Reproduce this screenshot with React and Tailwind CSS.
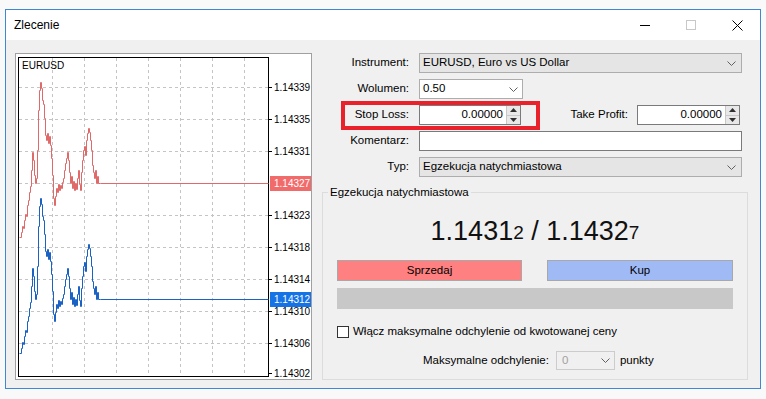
import React from 'react';

const red = [
  [19, 237], [21, 232], [22, 226], [23, 228], [24, 220], [25, 214], [26, 216], [27, 205], [28, 200], [29, 192],
  [30, 186], [31, 170], [32, 152], [33, 160], [34, 175], [35, 183], [36, 178], [37, 150], [38, 110], [39, 90],
  [40, 82], [41, 88], [42, 100], [43, 104], [44, 118], [45, 135], [46, 140], [47, 133], [48, 143], [49, 136],
  [50, 145], [51, 158], [52, 175], [53, 198], [54, 205], [55, 196], [56, 188], [57, 192], [58, 184], [59, 190],
  [60, 185], [61, 188], [62, 182], [63, 178], [64, 170], [65, 163], [66, 158], [67, 152], [68, 160], [69, 172],
  [70, 183], [71, 176], [72, 188], [73, 181], [74, 190], [75, 183], [76, 189], [77, 178], [78, 170], [79, 184],
  [80, 190], [81, 172], [82, 160], [83, 150], [84, 146], [85, 155], [86, 140], [87, 133], [88, 128], [89, 132],
  [90, 140], [91, 150], [92, 165], [93, 172], [94, 178], [95, 170], [96, 183], [97, 176], [98, 183], [100, 183],
  [268, 183],
];

// linia schodkowa jak w MT4
const toSteps = (pts, dy) => {
  let out = [];
  pts.forEach(([x, y], i) => {
    if (i > 0) out.push(`${x + 0.5},${pts[i - 1][1] + dy}`);
    out.push(`${x + 0.5},${y + dy}`);
  });
  return out.join(' ');
};

const priceLabels = [
  [87, '1.14339'], [119, '1.14335'], [151, '1.14331'], [215, '1.14323'], [247, '1.14318'],
  [279, '1.14314'], [311, '1.14310'], [343, '1.14306'], [373, '1.14302'],
];

// wykres EURUSD
function Chart() {
  return (
    <div className="w-[297px] h-[327px] border border-[#a0a0a0] bg-white shrink-0">
      <svg width="295" height="325" viewBox="16 54 295 325" className="block">
        {[52, 84, 116, 148, 180, 212, 244].map((x) => (
          <line key={x} x1={x + 0.5} y1="58" x2={x + 0.5} y2="376" stroke="#c4c4c4" strokeDasharray="3 3" />
        ))}
        {[87, 119, 151, 183, 215, 247, 279, 311, 343].map((y) => (
          <line key={y} x1="19" y1={y + 0.5} x2="268" y2={y + 0.5} stroke="#c4c4c4" strokeDasharray="3 3" />
        ))}
        <rect x="18.5" y="57.5" width="250" height="319" fill="none" stroke="#000" />
        {priceLabels.map(([y]) => (
          <line key={y} x1="268" y1={y + 0.5} x2="272" y2={y + 0.5} stroke="#000" />
        ))}
        <text x="22" y="69" fontSize="10" fontFamily="Liberation Sans, sans-serif" fill="#000">EURUSD</text>
        <polyline points={toSteps(red, 0.5)} fill="none" stroke="#e06a6a" strokeWidth="1" />
        <polyline points={toSteps(red, 116.5)} fill="none" stroke="#1a62c4" strokeWidth="1" />
        {priceLabels.map(([y, t]) => (
          <text key={t} x="274" y={y + 4} fontSize="10" fontFamily="Liberation Sans, sans-serif" fill="#000">{t}</text>
        ))}
        <rect x="270" y="176" width="41" height="15" fill="#f26b6b" />
        <text x="274" y="187" fontSize="10" fontFamily="Liberation Sans, sans-serif" fill="#fff">1.14327</text>
        <rect x="270" y="292" width="41" height="15" fill="#1573e6" />
        <text x="274" y="303" fontSize="10" fontFamily="Liberation Sans, sans-serif" fill="#fff">1.14312</text>
      </svg>
    </div>
  );
}

function Chevron() {
  return (
    <svg width="9" height="5" viewBox="0 0 9 5" className="shrink-0">
      <path d="M0.5 0.5 L4.5 4.5 L8.5 0.5" fill="none" stroke="#606060" />
    </svg>
  );
}

function Spinner() {
  return (
    <div className="w-[14px] h-full flex flex-col border-l border-[#c8c8c8] bg-[#e8e8e8]">
      <div className="flex-1 flex items-center justify-center border-b border-[#c8c8c8]">
        <svg width="7" height="4" viewBox="0 0 7 4"><path d="M0 4 L3.5 0 L7 4 Z" fill="#303030" /></svg>
      </div>
      <div className="flex-1 flex items-center justify-center">
        <svg width="7" height="4" viewBox="0 0 7 4"><path d="M0 0 L3.5 4 L7 0 Z" fill="#303030" /></svg>
      </div>
    </div>
  );
}

function Label({ children }) {
  return <div className="w-[88px] text-right pr-[1px] shrink-0">{children}</div>;
}

export default function App() {
  return (
    <div className="w-[766px] h-[399px] bg-[#f9f9f9] overflow-hidden font-['Liberation_Sans',sans-serif] text-[11.5px] text-black">
      <div className="ml-[5px] mt-[9px] w-[756px] h-[380px] border border-[#3d87d4] bg-[#f0f0f0] flex flex-col">
        {/* pasek tytułu */}
        <div className="h-[30px] bg-white flex items-center shrink-0">
          <span className="pl-[8px] text-[12px] flex-1">Zlecenie</span>
          <div className="w-[46px] h-full flex items-center justify-center">
            <div className="w-[10px] h-px bg-black" />
          </div>
          <div className="w-[46px] h-full flex items-center justify-center">
            <div className="w-[10px] h-[10px] border border-[#c8c8c8]" />
          </div>
          <div className="w-[46px] h-full flex items-center justify-center">
            <svg width="11" height="11" viewBox="0 0 11 11">
              <path d="M0.5 0.5 L10.5 10.5 M10.5 0.5 L0.5 10.5" stroke="#000" strokeWidth="1" />
            </svg>
          </div>
        </div>

        <div className="flex pl-[9px] pt-[13px] gap-[10px]">
          <Chart />

          <div className="w-[426px] flex flex-col">
            <div className="flex items-center h-[20px]">
              <Label>Instrument:</Label>
              <div className="ml-[9px] w-[323px] h-[20px] bg-[#e5e5e5] border border-[#adadad] flex items-center pl-[3px] pr-[5px]">
                <span className="flex-1">EURUSD, Euro vs US Dollar</span>
                <Chevron />
              </div>
            </div>

            <div className="flex items-center h-[20px] mt-[6px]">
              <Label>Wolumen:</Label>
              <div className="ml-[9px] w-[104px] h-[20px] bg-white border border-[#adadad] flex items-center pl-[3px] pr-[4px]">
                <span className="flex-1">0.50</span>
                <Chevron />
              </div>
            </div>

            <div className="relative flex items-center h-[20px] mt-[6px]">
              <Label>Stop Loss:</Label>
              <div className="ml-[9px] w-[102px] h-[20px] bg-white border border-[#7a7a7a] flex items-center">
                <span className="flex-1 text-right pr-[3px]">0.00000</span>
                <Spinner />
              </div>
              <div className="w-[107px] text-right">Take Profit:</div>
              <div className="ml-[9px] w-[103px] h-[20px] bg-white border border-[#7a7a7a] flex items-center">
                <span className="flex-1 text-right pr-[3px]">0.00000</span>
                <Spinner />
              </div>
              <div className="absolute left-[19px] top-[-4px] w-[199px] h-[29px] border-4 border-[#e8212b]" />
            </div>

            <div className="flex items-center h-[20px] mt-[6px]">
              <Label>Komentarz:</Label>
              <div className="ml-[9px] w-[323px] h-[20px] bg-white border border-[#7a7a7a]" />
            </div>

            <div className="flex items-center h-[20px] mt-[6px]">
              <Label>Typ:</Label>
              <div className="ml-[9px] w-[323px] h-[20px] bg-[#e5e5e5] border border-[#adadad] flex items-center pl-[3px] pr-[5px]">
                <span className="flex-1">Egzekucja natychmiastowa</span>
                <Chevron />
              </div>
            </div>

            {/* ramka grupy */}
            <div className="relative mt-[15px] h-[188px] border border-[#dcdcdc] flex flex-col px-[14px]">
              <span className="absolute left-[5px] top-[-8px] bg-[#f0f0f0] px-[2px] leading-[14px]">Egzekucja natychmiastowa</span>
              <div className="mt-[23px] h-[30px] flex items-center justify-center text-[#111]">
                <span className="text-[27px]">1.1431</span>
                <span className="text-[19px] mt-[5px]">2</span>
                <span className="text-[27px] whitespace-pre"> / 1.1432</span>
                <span className="text-[19px] mt-[5px]">7</span>
              </div>
              <div className="mt-[14px] flex gap-[25px]">
                <div className="w-[185px] h-[21px] bg-[#ff8080] border border-[#a8a8a8] flex items-center justify-center">Sprzedaj</div>
                <div className="w-[186px] h-[21px] bg-[#a0baf6] border border-[#a8a8a8] flex items-center justify-center">Kup</div>
              </div>
              <div className="mt-[7px] w-[396px] h-[21px] bg-[#c8c8c8]" />
              <div className="mt-[16px] flex items-center h-[14px]">
                <div className="w-[12px] h-[12px] bg-white border border-[#333]" />
                <span className="ml-[4px]">Włącz maksymalne odchylenie od kwotowanej ceny</span>
              </div>
              <div className="mt-[12px] ml-[86px] flex items-center h-[19px]">
                <span>Maksymalne odchylenie:</span>
                <div className="ml-[7px] w-[59px] h-[19px] bg-[#f0f0f0] border border-[#cccccc] flex items-center pl-[5px] pr-[4px]">
                  <span className="flex-1 text-[#a0a0a0]">0</span>
                  <Chevron />
                </div>
                <span className="ml-[5px]">punkty</span>
              </div>
            </div>
          </div>
        </div>
      </div>
    </div>
  );
}
